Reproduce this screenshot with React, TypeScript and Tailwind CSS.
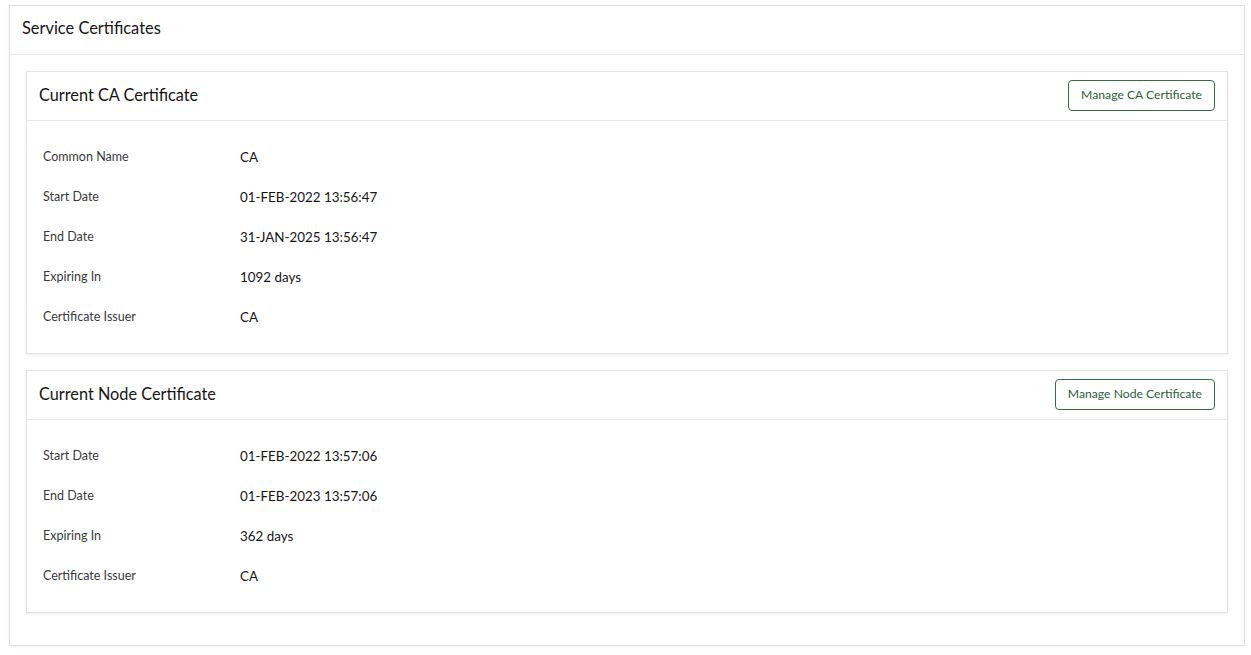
const caRows = [
  { label: 'Common Name', value: 'CA' },
  { label: 'Start Date', value: '01-FEB-2022 13:56:47' },
  { label: 'End Date', value: '31-JAN-2025 13:56:47' },
  { label: 'Expiring In', value: '1092 days' },
  { label: 'Certificate Issuer', value: 'CA' },
]

const nodeRows = [
  { label: 'Start Date', value: '01-FEB-2022 13:57:06' },
  { label: 'End Date', value: '01-FEB-2023 13:57:06' },
  { label: 'Expiring In', value: '362 days' },
  { label: 'Certificate Issuer', value: 'CA' },
]

function CertCard({ title, action, rows }: { title: string; action: string; rows: { label: string; value: string }[] }) {
  return (
    <div className="border border-[#e3e3e3] bg-white shadow-[0_1px_3px_rgba(0,0,0,0.08)]">
      <div className="flex h-[49px] items-center justify-between border-b border-[#e8e8e8] pl-[12px] pr-[12px] pb-[2px]">
        <h2 className="text-[16.3px] text-[#161513]">{title}</h2>
        <button className="h-[31px] rounded-[4px] border border-[#356b47] px-[12px] text-[12.2px] text-[#2c5e3d]">
          {action}
        </button>
      </div>
      <div className="px-[16px] py-[16px]">
        {rows.map((row) => (
          <div key={row.label} className="flex h-[40px] items-center">
            <div className="w-[197px] text-[12.5px] text-[#3a3a3a]">{row.label}</div>
            <div className="text-[13.4px] text-[#161513]">{row.value}</div>
          </div>
        ))}
      </div>
    </div>
  )
}

export default function App() {
  return (
    <div className="min-h-screen bg-white pt-[5px] pl-[9px] pr-[6px] font-['Lato',sans-serif]">
      <div className="border border-[#e0e0e0] bg-white shadow-[0_1px_3px_rgba(0,0,0,0.06)]">
        <div className="flex h-[49px] items-center border-b border-[#e6e6e6] px-[12px] pb-[3px]">
          <h1 className="text-[16.4px] text-[#161513]">Service Certificates</h1>
        </div>
        <div className="flex flex-col gap-[16px] px-[16px] pt-[16px] pb-[32px]">
          <CertCard title="Current CA Certificate" action="Manage CA Certificate" rows={caRows} />
          <CertCard title="Current Node Certificate" action="Manage Node Certificate" rows={nodeRows} />
        </div>
      </div>
    </div>
  )
}
